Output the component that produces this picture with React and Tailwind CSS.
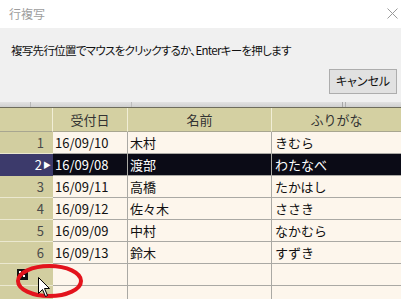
import React from 'react'

const ROWS = [
  ['1', '16/09/10', '木村', 'きむら'],
  ['2', '16/09/08', '渡部', 'わたなべ'],
  ['3', '16/09/11', '高橋', 'たかはし'],
  ['4', '16/09/12', '佐々木', 'ささき'],
  ['5', '16/09/09', '中村', 'なかむら'],
  ['6', '16/09/13', '鈴木', 'すずき'],
  ['', '', '', ''],
  ['', '', '', ''],
]

function NewRowIcon() {
  return (
    <svg width="11" height="11" viewBox="0 0 11 11" className="ml-[17px]">
      <rect x="0" y="0" width="11" height="11" fill="#111" />
      <rect x="2" y="2" width="2" height="2" fill="#fff" />
      <rect x="4" y="4" width="2" height="2" fill="#fff" />
      <rect x="6" y="6" width="2" height="2" fill="#fff" />
      <rect x="6" y="2" width="2" height="2" fill="#fff" />
      <rect x="2" y="6" width="2" height="2" fill="#fff" />
    </svg>
  )
}

function GridRow({ row, index }) {
  const [no, date, name, kana] = row
  const sel = index === 1
  const cell = sel ? 'bg-[#0b0b16] text-white' : 'bg-[#fdf6ec] text-[#111]'
  return (
    <div className="grid grid-cols-[53px_75px_144px_1fr] h-[22px] min-h-[22px]">
      <div
        className={`flex items-center justify-end pr-[9px] border-b ${
          sel ? 'bg-[#3c3a6b] text-white border-[#3c3a6b]' : 'bg-[#d2cea0] text-[#4a4a4a] border-[#ebe8cf]'
        }`}
      >
        {index === 6 ? (
          <div className="w-full flex items-center"><NewRowIcon /></div>
        ) : (
          <>
            <span>{no}</span>
            {sel && <span className="text-[8px] leading-none ml-[1px] mr-[-7px]">▶</span>}
          </>
        )}
      </div>
      <div className={`flex items-center pl-[2px] border-b border-r border-[#aaa9a4] ${cell}`}>{date}</div>
      <div className={`flex items-center pl-[2px] border-b border-r border-[#aaa9a4] ${cell}`}>{name}</div>
      <div className={`flex items-center pl-[3px] border-b border-[#aaa9a4] ${cell}`}>{kana}</div>
    </div>
  )
}

export default function App() {
  return (
    <div className="relative w-[401px] h-[299px] overflow-hidden bg-[#fdf6ec] font-['Noto_Sans_CJK_JP',sans-serif] leading-none">
      {/* ダイアログ */}
      <div className="h-[28px] bg-white flex items-center justify-between pl-[9px] pr-[3px]">
        <span className="text-[12px] text-[#9d9d9d] [font-feature-settings:'palt']">行複写</span>
        <svg width="11" height="11" viewBox="0 0 11 11" className="mb-[2px]">
          <path d="M0.5 0.5 L10.5 10.5 M10.5 0.5 L0.5 10.5" stroke="#9a9a9a" strokeWidth="1" />
        </svg>
      </div>
      <div className="h-[74px] bg-[#f0f0f0] flex flex-col px-[11px] pt-[17px]">
        <p className="text-[11.5px] tracking-[-0.7px] text-[#111] [font-feature-settings:'palt']">
          複写先行位置でマウスをクリックするか、Enterキーを押します
        </p>
        <div className="flex justify-end mt-[12px] mr-[-7px]">
          <button
            type="button"
            className="w-[68px] h-[25px] bg-[#e1e1e1] border border-[#adadad] text-[12px] text-[#111] [font-feature-settings:'palt']"
          >
            キャンセル
          </button>
        </div>
      </div>
      {/* 背後のウィンドウの影 */}
      <div className="relative h-[5px] bg-gradient-to-b from-[#e2e2e2] to-[#cfcfcf]">
        <div className="absolute left-[30px] top-0 h-full w-px bg-[#b8b8b8]" />
        <div className="absolute left-[131px] top-0 h-full w-px bg-[#bdbdbd]" />
        <div className="absolute left-[342px] top-0 h-full w-px bg-[#a8a8a8]" />
        <div className="absolute left-[345px] top-0 h-full w-px bg-[#b0b0b0]" />
      </div>
      {/* グリッド */}
      <div className="text-[13px]">
        <div className="grid grid-cols-[53px_75px_144px_1fr] h-[25px] border-t border-[#6e6c5c] bg-[#d4d0a2] text-[#333]">
          <div className="border-r border-[#f1eed6] border-b border-b-[#a8a690]" />
          <div className="flex items-center justify-center border-r border-[#f1eed6] border-b border-b-[#a8a690]">受付日</div>
          <div className="flex items-center justify-center border-r border-[#f1eed6] border-b border-b-[#a8a690]">名前</div>
          <div className="flex items-center justify-center border-b border-b-[#a8a690]">ふりがな</div>
        </div>
        {ROWS.map((r, i) => (
          <GridRow key={i} row={r} index={i} />
        ))}
      </div>
      {/* 赤丸の注記とマウスカーソル */}
      <svg className="absolute left-[14px] top-[262px]" width="72" height="40" viewBox="0 0 72 40">
        <ellipse cx="35.5" cy="19" rx="31.5" ry="15" fill="none" stroke="#e3131c" strokeWidth="4" />
      </svg>
      <svg className="absolute left-[38px] top-[277px]" width="13" height="21" viewBox="0 0 13 21">
        <path d="M0.5 0.5 L0.5 16.5 L4.5 12.5 L7.5 19.5 L9.5 18.5 L6.5 11.5 L11.5 11.5 Z" fill="#fff" stroke="#000" strokeWidth="1" />
      </svg>
    </div>
  )
}
